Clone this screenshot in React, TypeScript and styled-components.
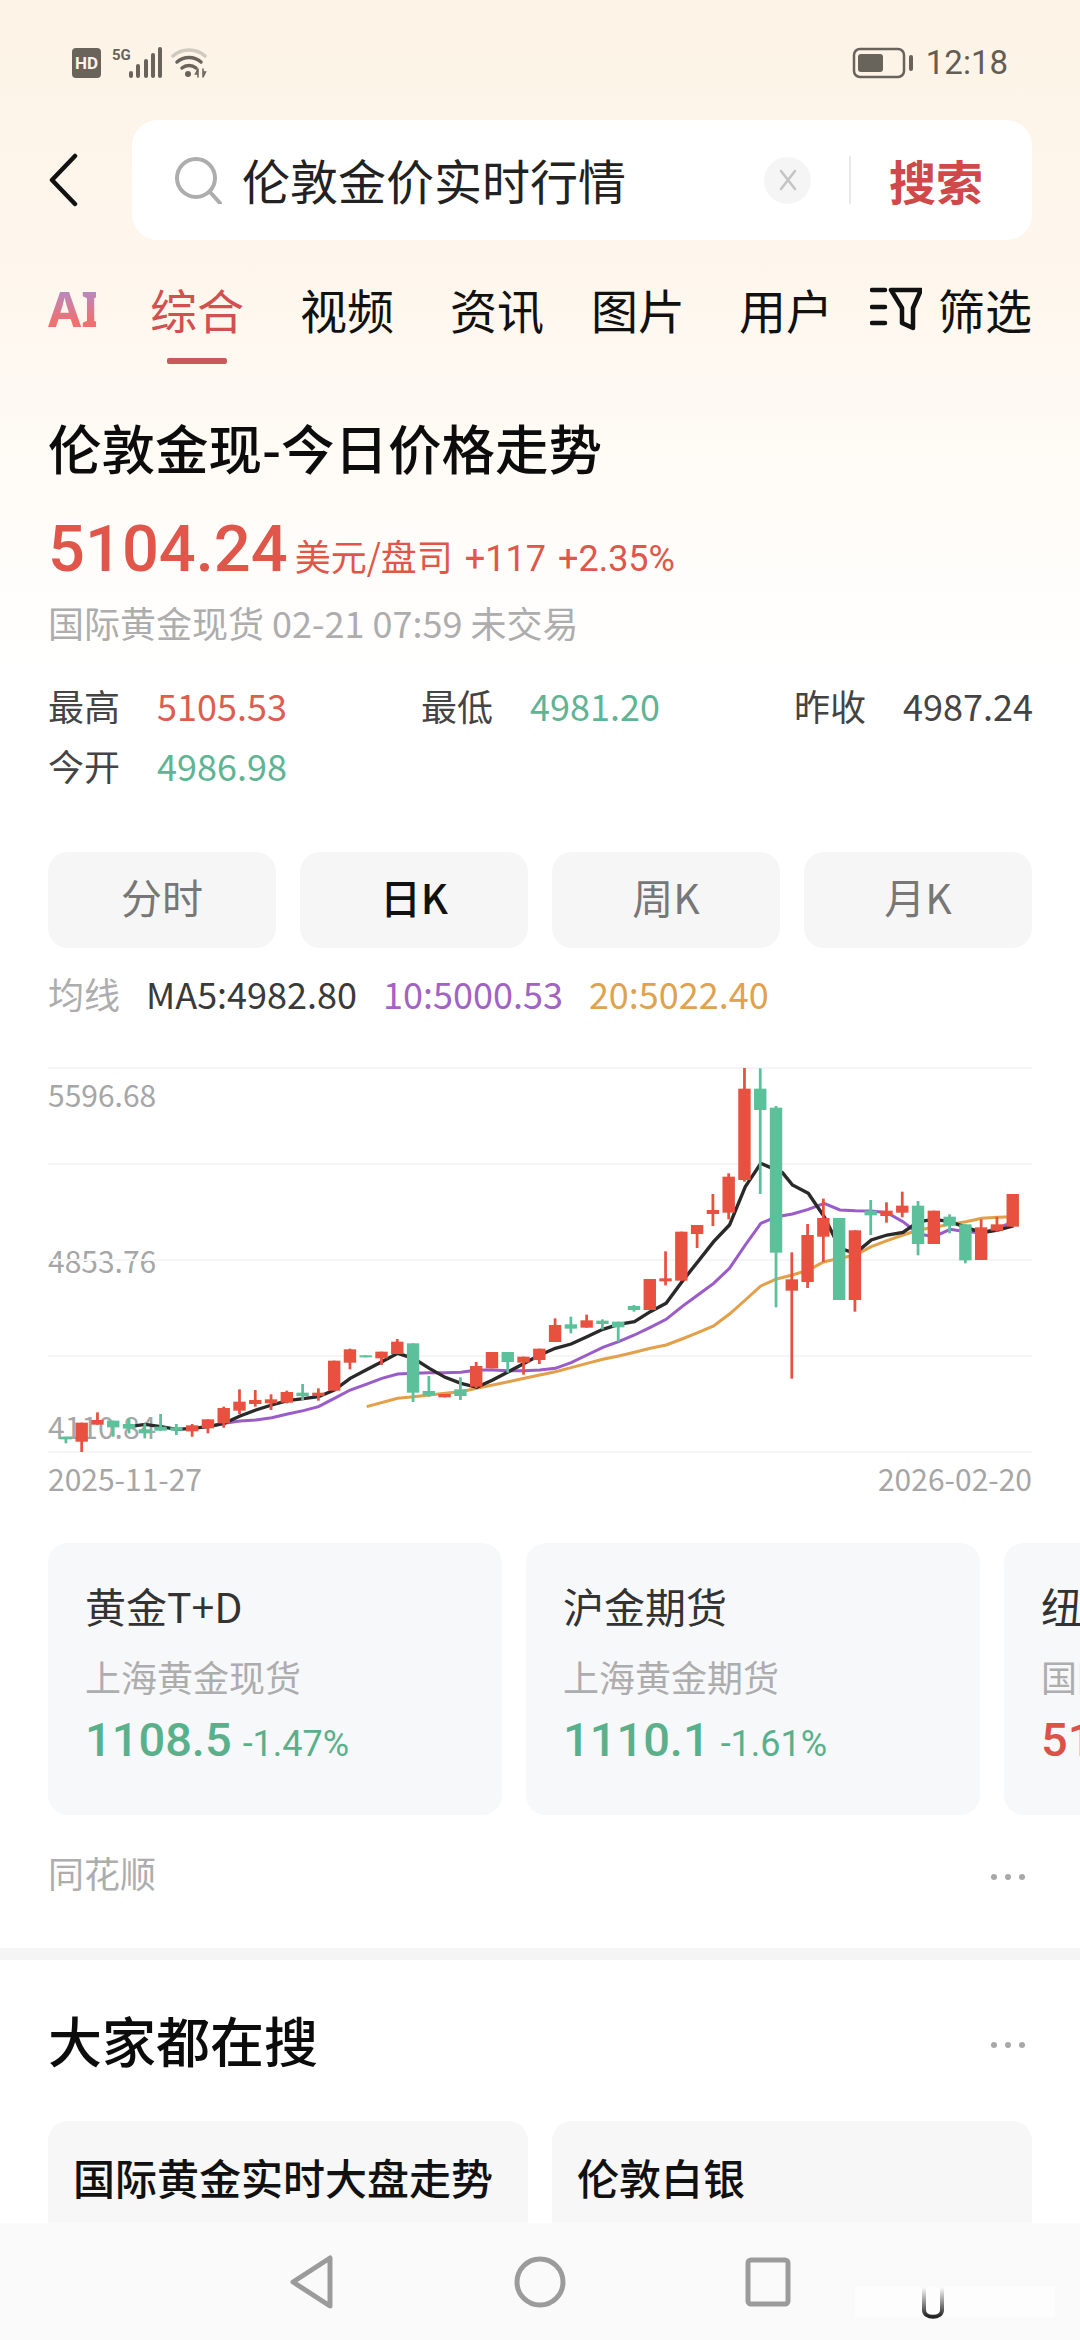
import { createGlobalStyle, styled } from 'styled-components';

const RED = '#e8503f';
const GREEN = '#5cc09a';

// wickTop, wickBottom, bodyTop, bodyBottom, r = up / g = down (chart units, one per day)
const candles: [number, number, number, number, 'r' | 'g'][] = [
  [1190, 1210, 1190, 1198, 'g'], [1148, 1236, 1148, 1205, 'r'], [1117, 1154, 1140, 1154, 'r'],
  [1142, 1190, 1142, 1162, 'g'], [1135, 1180, 1152, 1166, 'g'], [1150, 1195, 1168, 1180, 'g'],
  [1122, 1172, 1160, 1172, 'g'], [1152, 1185, 1162, 1172, 'g'], [1152, 1190, 1156, 1174, 'r'],
  [1138, 1180, 1138, 1165, 'r'], [1100, 1163, 1104, 1150, 'r'], [1048, 1122, 1085, 1112, 'r'],
  [1050, 1100, 1080, 1092, 'r'], [1063, 1110, 1078, 1090, 'r'], [1052, 1090, 1056, 1088, 'r'],
  [1032, 1080, 1058, 1068, 'g'], [1045, 1082, 1058, 1068, 'r'], [962, 1052, 962, 1052, 'r'],
  [926, 988, 928, 968, 'r'], [946, 952, 946, 952, 'g'], [935, 975, 935, 955, 'r'],
  [897, 942, 905, 942, 'r'], [910, 1086, 910, 1058, 'g'], [1008, 1070, 1053, 1066, 'g'],
  [1062, 1072, 1062, 1072, 'r'], [1012, 1080, 1048, 1068, 'g'], [966, 1044, 978, 1040, 'r'],
  [936, 985, 936, 985, 'r'], [936, 998, 936, 966, 'g'], [950, 1004, 950, 968, 'r'],
  [926, 972, 926, 960, 'r'], [835, 906, 855, 906, 'r'], [830, 880, 853, 866, 'g'],
  [824, 863, 841, 863, 'r'], [838, 868, 842, 852, 'g'], [845, 905, 845, 862, 'g'],
  [795, 815, 798, 810, 'g'], [717, 810, 717, 810, 'r'], [634, 736, 715, 724, 'r'],
  [575, 722, 575, 722, 'r'], [555, 624, 555, 582, 'r'], [462, 558, 510, 522, 'r'],
  [400, 538, 410, 518, 'r'], [84, 425, 146, 420, 'r'], [85, 462, 146, 210, 'g'],
  [198, 802, 203, 638, 'g'], [637, 1016, 718, 752, 'r'], [552, 744, 585, 726, 'r'],
  [476, 666, 534, 590, 'r'], [534, 780, 534, 780, 'g'], [571, 815, 571, 780, 'r'],
  [480, 585, 512, 526, 'g'], [487, 548, 512, 528, 'r'], [455, 532, 497, 518, 'r'],
  [483, 646, 497, 612, 'g'], [512, 612, 512, 612, 'r'], [523, 580, 530, 557, 'g'],
  [553, 670, 553, 661, 'g'], [538, 660, 562, 660, 'r'], [530, 575, 553, 572, 'r'],
  [462, 560, 462, 560, 'r'],
];

const ma5 =
  '375,1160 421,1153 467,1160 513,1168 559,1165 605,1160 651,1150 697,1128 743,1110 789,1095 835,1082 881,1076 925,1070 971,1050 1017,1015 1063,990 1109,965 1155,940 1201,955 1247,985 1293,1012 1339,1030 1385,1042 1431,1020 1477,995 1523,970 1568,945 1613,925 1659,912 1705,890 1751,868 1797,853 1843,845 1889,815 1935,790 1981,725 2027,665 2073,605 2119,555 2165,440 2210,370 2273,398 2302,435 2348,460 2394,530 2440,625 2485,640 2531,600 2577,585 2623,577 2669,545 2714,538 2760,545 2806,562 2852,578 2898,570 2944,558';
const ma10 =
  '605,1160 651,1150 697,1143 743,1140 789,1133 835,1122 881,1112 925,1100 971,1075 1017,1050 1063,1033 1109,1015 1155,1002 1201,1000 1247,998 1293,998 1339,997 1385,990 1431,990 1477,992 1523,992 1568,990 1613,985 1659,968 1705,945 1751,922 1797,905 1843,885 1889,862 1935,838 1981,800 2027,765 2073,730 2119,685 2165,615 2210,550 2256,530 2302,522 2348,508 2394,490 2440,510 2485,512 2531,513 2577,518 2623,545 2669,582 2714,590 2760,568 2806,575 2852,578 2898,565 2944,545';
const ma20 =
  '1065,1100 1155,1075 1201,1070 1247,1065 1293,1060 1339,1055 1385,1045 1431,1035 1477,1025 1523,1015 1568,1005 1613,995 1659,983 1705,970 1751,958 1797,948 1843,937 1889,925 1935,915 1981,897 2027,878 2073,858 2119,822 2165,780 2210,738 2256,717 2302,705 2348,690 2394,665 2440,655 2485,645 2531,620 2577,602 2623,585 2669,570 2714,562 2760,553 2806,545 2852,535 2898,532 2944,530';

const tabs = [
  { label: '综合', gap: 54, active: true },
  { label: '视频', gap: 56 },
  { label: '资讯', gap: 56 },
  { label: '图片', gap: 47 },
  { label: '用户', gap: 54 },
];

const periods = ['分时', '日K', '周K', '月K'];

const cards = [
  { name: '黄金T+D', sub: '上海黄金现货', price: '1108.5', change: '-1.47%', up: false },
  { name: '沪金期货', sub: '上海黄金期货', price: '1110.1', change: '-1.61%', up: false },
  { name: '纽约黄金', sub: '国际黄金期货', price: '5126.4', change: '+2.12%', up: true },
];

const Chart = () => (
  <ChartBox>
    <AxisLabel $top={7}>5596.68</AxisLabel>
    <AxisLabel $top={173}>4853.76</AxisLabel>
    <AxisLabel $top={339}>4110.84</AxisLabel>
    <ChartSvg viewBox="139 84 2859 1152" preserveAspectRatio="none">
      {[84, 372, 660, 948, 1236].map((y) => (
        <line key={y} x1="139" x2="2998" y1={y} y2={y} stroke="#f5f5f5" strokeWidth="6" />
      ))}
      <polyline points={ma20} fill="none" stroke="#e3a04a" strokeWidth="9" />
      <polyline points={ma10} fill="none" stroke="#9a5cc8" strokeWidth="9" />
      <polyline points={ma5} fill="none" stroke="#2a2a2a" strokeWidth="10" />
      {candles.map(([wt, wb, bt, bb, dir], i) => {
        const x = 191 + i * 45.85;
        const color = dir === 'r' ? RED : GREEN;
        return (
          <g key={i} fill={color}>
            <rect x={x - 4} y={wt} width="8" height={wb - wt} />
            <rect x={x - 18} y={bt} width="36" height={bb - bt} />
          </g>
        );
      })}
    </ChartSvg>
  </ChartBox>
);

export default function App() {
  return (
    <Page>
      <GlobalStyle />
      <StatusBar>
        <StatusGroup>
          <HdBadge>HD</HdBadge>
          <FiveG>5G</FiveG>
          <svg width="33" height="32" viewBox="0 0 33 32" fill="#68635b">
            <rect x="0" y="24" width="4" height="7" rx="2" />
            <rect x="7" y="17" width="4" height="14" rx="2" />
            <rect x="15" y="12" width="4" height="19" rx="2" />
            <rect x="22" y="6" width="4" height="25" rx="2" />
            <rect x="29" y="0" width="4" height="31" rx="2" />
          </svg>
          <svg width="38" height="32" viewBox="0 0 38 32" fill="none" strokeLinecap="round">
            <path d="M2 9C11 1 25 1 34 9" stroke="#cfc9be" strokeWidth="3.5" />
            <path d="M6 15C13 9 23 9 30 15" stroke="#68635b" strokeWidth="3.5" />
            <path d="M11 21C15 17.5 21 17.5 25 21" stroke="#68635b" strokeWidth="3.5" />
            <circle cx="17" cy="27" r="3" fill="#68635b" />
            <path d="M27 22V30M27 22L24.5 27H27M32 30V22M32 30L34.5 25H32" stroke="#68635b" strokeWidth="1.5" />
          </svg>
        </StatusGroup>
        <StatusGroup>
          <svg width="62" height="32" viewBox="0 0 62 32" fill="none">
            <rect x="2" y="2" width="50" height="28" rx="6" stroke="#68635b" strokeWidth="2.5" />
            <rect x="6" y="7" width="25" height="18" rx="3" fill="#68635b" />
            <rect x="57" y="8" width="4" height="16" rx="2" fill="#68635b" />
          </svg>
          <Clock>12:18</Clock>
        </StatusGroup>
      </StatusBar>

      <SearchRow>
        <BackButton>
          <svg width="30" height="54" viewBox="0 0 30 54" fill="none">
            <path d="M27 3L4 27L27 51" stroke="#111" strokeWidth="4.5" strokeLinecap="round" strokeLinejoin="round" />
          </svg>
        </BackButton>
        <SearchBox>
          <svg width="48" height="48" viewBox="0 0 48 48" fill="none">
            <circle cx="22" cy="22" r="19" stroke="#adadad" strokeWidth="4" />
            <path d="M36 36L46 47" stroke="#adadad" strokeWidth="4" strokeLinecap="round" />
          </svg>
          <SearchText>伦敦金价实时行情</SearchText>
          <ClearButton>
            <svg width="22" height="22" viewBox="0 0 22 22" fill="none">
              <path d="M4 2L18 20M18 2L4 20" stroke="#c4c4c4" strokeWidth="2.5" strokeLinecap="round" />
            </svg>
          </ClearButton>
          <SearchDivider />
          <SearchAction>搜索</SearchAction>
        </SearchBox>
      </SearchRow>

      <TabRow>
        <AiTab>AI</AiTab>
        {tabs.map((t) => (
          <Tab key={t.label} $gap={t.gap} $active={t.active}>
            {t.label}
          </Tab>
        ))}
        <FilterTab>
          <svg width="52" height="48" viewBox="0 0 52 48" fill="none" stroke="#111" strokeWidth="4.5" strokeLinecap="round" strokeLinejoin="round">
            <path d="M2 5H15M2 22H15M2 38H15" />
            <path d="M21 5H51L43 23V43L32 38V23Z" />
          </svg>
          <FilterLabel>筛选</FilterLabel>
        </FilterTab>
      </TabRow>

      <Section>
        <Title>伦敦金现-今日价格走势</Title>
        <PriceRow>
          <Price>5104.24</Price>
          <PriceUnit>美元/盘司</PriceUnit>
          <PriceChange>+117</PriceChange>
          <PriceChange>+2.35%</PriceChange>
        </PriceRow>
        <Market>国际黄金现货 02-21 07:59 未交易</Market>

        <Stats>
          <Stat>
            <StatLabel>最高</StatLabel>
            <StatValue $color="#de5d50">5105.53</StatValue>
          </Stat>
          <Stat>
            <StatLabel>最低</StatLabel>
            <StatValue $color="#5fb494">4981.20</StatValue>
          </Stat>
          <Stat>
            <StatLabel>昨收</StatLabel>
            <StatValue $color="#444">4987.24</StatValue>
          </Stat>
          <Stat>
            <StatLabel>今开</StatLabel>
            <StatValue $color="#5fb494">4986.98</StatValue>
          </Stat>
        </Stats>

        <Periods>
          {periods.map((p) => (
            <Period key={p} $active={p === '日K'}>
              {p}
            </Period>
          ))}
        </Periods>

        <MaRow>
          <MaLabel>均线</MaLabel>
          <MaValue $color="#3a3a3a">MA5:4982.80</MaValue>
          <MaValue $color="#a163c4">10:5000.53</MaValue>
          <MaValue $color="#dfa24e">20:5022.40</MaValue>
        </MaRow>

        <Chart />
        <DateRow>
          <span>2025-11-27</span>
          <span>2026-02-20</span>
        </DateRow>
      </Section>

      <CardRow>
        {cards.map((c) => (
          <Card key={c.name}>
            <CardName>{c.name}</CardName>
            <CardSub>{c.sub}</CardSub>
            <CardPriceRow $up={c.up}>
              <CardPrice>{c.price}</CardPrice>
              <CardChange>{c.change}</CardChange>
            </CardPriceRow>
          </Card>
        ))}
      </CardRow>

      <SourceRow>
        <SourceName>同花顺</SourceName>
        <Dots>
          <i />
          <i />
          <i />
        </Dots>
      </SourceRow>

      <Band />

      <HotHeader>
        <HotTitle>大家都在搜</HotTitle>
        <Dots>
          <i />
          <i />
          <i />
        </Dots>
      </HotHeader>
      <HotGrid>
        <HotTile>国际黄金实时大盘走势</HotTile>
        <HotTile>伦敦白银</HotTile>
      </HotGrid>

      <NavBar>
        <svg width="46" height="56" viewBox="0 0 46 56" fill="none">
          <path d="M41 4V52L4 28Z" stroke="#9b9b9b" strokeWidth="5" strokeLinejoin="round" />
        </svg>
        <svg width="52" height="52" viewBox="0 0 52 52" fill="none">
          <circle cx="26" cy="26" r="23" stroke="#9b9b9b" strokeWidth="5" />
        </svg>
        <svg width="46" height="50" viewBox="0 0 46 50" fill="none">
          <rect x="3" y="3" width="40" height="44" rx="3" stroke="#9b9b9b" strokeWidth="5" />
        </svg>
        <Watermark width="210" height="36" viewBox="0 0 210 36" fill="none">
          <defs>
            <linearGradient id="wm" x1="0" y1="0" x2="0" y2="1">
              <stop offset="0" stopColor="#333" stopOpacity="0" />
              <stop offset="1" stopColor="#222" />
            </linearGradient>
          </defs>
          <rect x="0" y="2" width="200" height="30" fill="#fff" opacity="0.5" />
          <path d="M69 2V25C69 34 87 34 87 25V2" stroke="url(#wm)" strokeWidth="4" />
        </Watermark>
      </NavBar>
    </Page>
  );
}

const GlobalStyle = createGlobalStyle`
  html, body {
    margin: 0;
    padding: 0;
    background: #fff;
  }
  * {
    box-sizing: border-box;
  }
  body {
    font-family: 'Noto Sans CJK SC', 'Noto Sans', sans-serif;
  }
`;

const Page = styled.div`
  position: relative;
  width: 1080px;
  height: 2340px;
  overflow: hidden;
  background: linear-gradient(180deg, #fdf3e6 0, #fef7ee 300px, #fffdfa 560px, #fff 680px);
`;

const StatusBar = styled.div`
  height: 120px;
  padding: 6px 72px 0 72px;
  display: flex;
  align-items: center;
  justify-content: space-between;
`;

const StatusGroup = styled.div`
  display: flex;
  align-items: center;
  gap: 9px;
`;

const HdBadge = styled.span`
  width: 29px;
  height: 30px;
  border-radius: 4px;
  background: #68635b;
  color: #fdf3e6;
  font: 700 17px/30px 'Roboto', sans-serif;
  text-align: center;
`;

const FiveG = styled.span`
  align-self: flex-start;
  margin: 0 -10px 0 2px;
  width: 18px;
  color: #68635b;
  font: 700 15px/16px 'Roboto', sans-serif;
`;

const Clock = styled.span`
  margin-left: 3px;
  color: #625d55;
  font: 400 33px/40px 'Roboto', sans-serif;
`;

const SearchRow = styled.div`
  height: 120px;
  padding: 0 48px;
  display: flex;
  align-items: center;
`;

const BackButton = styled.div`
  width: 84px;
  display: flex;
`;

const SearchBox = styled.div`
  flex: 1;
  height: 120px;
  border-radius: 26px;
  background: #fff;
  padding: 0 49px 0 42px;
  display: flex;
  align-items: center;
`;

const SearchText = styled.span`
  margin: 0 0 2px 20px;
  flex: 1;
  color: #222;
  font-size: 48px;
  line-height: 60px;
  white-space: nowrap;
`;

const ClearButton = styled.div`
  width: 47px;
  height: 47px;
  border-radius: 50%;
  background: #f5f5f5;
  display: flex;
  align-items: center;
  justify-content: center;
`;

const SearchDivider = styled.div`
  width: 2px;
  height: 48px;
  margin: 0 38px;
  background: #e8e8e8;
`;

const SearchAction = styled.span`
  color: #d0494a;
  font-size: 47px;
  font-weight: 700;
  line-height: 60px;
`;

const TabRow = styled.div`
  height: 140px;
  padding: 37px 48px 0;
  display: flex;
  align-items: flex-start;
`;

const AiTab = styled.span`
  width: 48px;
  background: linear-gradient(180deg, #9c96e6, #f07070 70%);
  -webkit-background-clip: text;
  background-clip: text;
  color: transparent;
  font: 700 48px/64px 'Noto Sans', sans-serif;
`;

const Tab = styled.span<{ $gap: number; $active?: boolean }>`
  position: relative;
  margin-left: ${(p) => p.$gap}px;
  color: ${(p) => (p.$active ? '#d25050' : '#111')};
  font-size: 47px;
  line-height: 64px;
  &::after {
    content: '';
    display: ${(p) => (p.$active ? 'block' : 'none')};
    position: absolute;
    left: 17px;
    top: 81px;
    width: 60px;
    height: 6px;
    border-radius: 2px;
    background: #c85a5a;
  }
`;

const FilterTab = styled.div`
  margin-left: auto;
  height: 64px;
  display: flex;
  align-items: center;
  gap: 16px;
`;

const FilterLabel = styled.span`
  color: #111;
  font-size: 47px;
  line-height: 64px;
`;

const Section = styled.div`
  padding: 35px 48px 0;
`;

const Title = styled.h1`
  margin: 0;
  height: 70px;
  color: #0c0c0c;
  font-size: 53.5px;
  font-weight: 500;
  line-height: 64px;
  white-space: nowrap;
`;

const PriceRow = styled.div`
  height: 70px;
  margin-top: 29px;
  display: flex;
  align-items: baseline;
  color: #e0564a;
  white-space: nowrap;
`;

const Price = styled.span`
  font: 500 65px/70px 'Roboto', sans-serif;
  margin-right: 7px;
`;

const PriceUnit = styled.span`
  font-size: 36px;
  margin-right: 12px;
`;

const PriceChange = styled.span`
  font: 400 36px/40px 'Roboto', sans-serif;
  margin-right: 12px;
`;

const Market = styled.div`
  margin-top: 18px;
  height: 40px;
  color: #adadad;
  font-size: 36px;
  line-height: 40px;
  white-space: nowrap;
`;

const Stats = styled.div`
  margin-top: 35px;
  display: grid;
  grid-template-columns: 373px 373px 1fr;
  grid-auto-rows: 60px;
`;

const Stat = styled.div`
  display: flex;
  align-items: center;
  gap: 37px;
  padding-bottom: 5px;
  white-space: nowrap;
`;

const StatLabel = styled.span`
  color: #444;
  font-size: 36px;
`;

const StatValue = styled.span<{ $color: string }>`
  color: ${(p) => p.$color};
  font-size: 36px;
`;

const Periods = styled.div`
  margin-top: 55px;
  display: grid;
  grid-template-columns: repeat(4, 1fr);
  gap: 24px;
`;

const Period = styled.div<{ $active?: boolean }>`
  height: 96px;
  padding-bottom: 8px;
  border-radius: 20px;
  background: #f6f6f6;
  color: ${(p) => (p.$active ? '#111' : '#777')};
  font-size: 41px;
  font-weight: ${(p) => (p.$active ? 500 : 400)};
  display: flex;
  align-items: center;
  justify-content: center;
`;

const MaRow = styled.div`
  margin-top: 17px;
  height: 60px;
  padding-bottom: 5px;
  display: flex;
  align-items: center;
  gap: 26px;
`;

const MaLabel = styled.span`
  color: #adadad;
  font-size: 36px;
`;

const MaValue = styled.span<{ $color: string }>`
  color: ${(p) => p.$color};
  font-size: 36px;
`;

const ChartBox = styled.div`
  position: relative;
  margin-top: 43px;
  height: 384px;
`;

const ChartSvg = styled.svg`
  position: relative;
  display: block;
  width: 984px;
  height: 384px;
  overflow: visible;
`;

const AxisLabel = styled.span<{ $top: number }>`
  position: absolute;
  left: 0;
  top: ${(p) => p.$top}px;
  color: #a6a6a6;
  font-size: 30px;
  line-height: 38px;
`;

const DateRow = styled.div`
  margin-top: 9px;
  height: 40px;
  display: flex;
  justify-content: space-between;
  color: #a6a6a6;
  font-size: 30px;
  line-height: 35px;
`;

const CardRow = styled.div`
  margin-top: 42px;
  padding-left: 48px;
  display: flex;
  gap: 24px;
  overflow: hidden;
`;

const Card = styled.div`
  flex: 0 0 454px;
  height: 272px;
  border-radius: 20px;
  background: #f7f8fa;
  padding: 37px 37px 0;
`;

const CardName = styled.div`
  color: #333;
  font-size: 41px;
  line-height: 50px;
`;

const CardSub = styled.div`
  margin-top: 21px;
  color: #adadad;
  font-size: 36px;
  line-height: 50px;
`;

const CardPriceRow = styled.div<{ $up: boolean }>`
  margin-top: 12px;
  display: flex;
  align-items: baseline;
  gap: 11px;
  color: ${(p) => (p.$up ? '#dc5247' : '#5bb08c')};
`;

const CardPrice = styled.span`
  font: 500 47px/54px 'Roboto', sans-serif;
`;

const CardChange = styled.span`
  font: 400 36px/40px 'Roboto', sans-serif;
`;

const SourceRow = styled.div`
  margin-top: 30px;
  height: 60px;
  padding: 0 55px 0 48px;
  display: flex;
  align-items: center;
  justify-content: space-between;
`;

const SourceName = styled.span`
  padding-bottom: 6px;
  color: #adadad;
  font-size: 36px;
`;

const Dots = styled.div`
  margin-top: 4px;
  display: flex;
  gap: 8px;
  i {
    width: 6px;
    height: 6px;
    border-radius: 50%;
    background: #a8a8a8;
  }
`;

const Band = styled.div`
  margin-top: 43px;
  height: 12px;
  background: #f5f5f5;
`;

const HotHeader = styled.div`
  margin-top: 43px;
  height: 80px;
  padding: 0 55px 0 48px;
  display: flex;
  align-items: center;
  justify-content: space-between;
`;

const HotTitle = styled.h2`
  margin: 0;
  height: 80px;
  color: #0c0c0c;
  font-size: 54px;
  font-weight: 500;
  line-height: 74px;
`;

const HotGrid = styled.div`
  margin-top: 38px;
  padding: 0 48px;
  display: grid;
  grid-template-columns: repeat(2, 1fr);
  gap: 24px;
`;

const HotTile = styled.div`
  height: 160px;
  border-radius: 20px;
  background: #f7f7f8;
  padding: 26px 25px 0;
  color: #111;
  font-size: 42px;
  font-weight: 500;
  line-height: 60px;
`;

const NavBar = styled.div`
  position: absolute;
  left: 0;
  right: 0;
  bottom: 0;
  height: 117px;
  background: #fafafa;
  display: grid;
  grid-template-columns: repeat(3, 46px);
  justify-content: center;
  column-gap: 182px;
  align-items: center;
  justify-items: center;
`;

const Watermark = styled.svg`
  position: absolute;
  left: 855px;
  top: 62px;
`;
